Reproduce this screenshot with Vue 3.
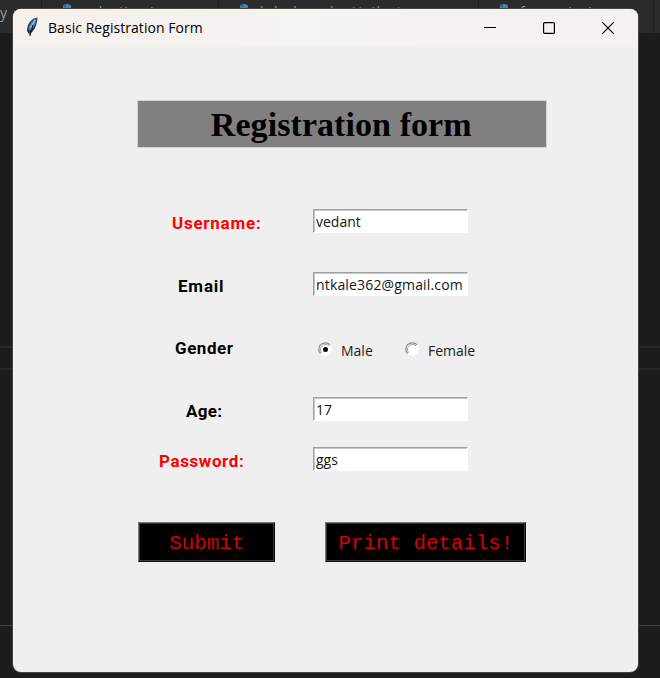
<script setup>
import { ref } from 'vue'

const tabs = [
  { key: 'a', title: 'selecting.in.py' },
  { key: 'b', title: 'label_and_attributes.py' },
  { key: 'c', title: 'forms_in_in.py' },
]
const username = ref('vedant')
const email = ref('ntkale362@gmail.com')
const age = ref('17')
const password = ref('ggs')
const gender = ref('Male')
</script>

<template>
  <div class="desktop">
    <div class="tabs">
      <div class="tab first">y</div>
      <div v-for="t in tabs" :key="t.key" class="tab" :class="'tab-' + t.key">
        <svg width="14" height="12" viewBox="0 0 14 12"><path d="M0 6Q0 4 3 4V2.500Q3 0 7 0t4 2.500V4q3 0 3 2v4H0z" fill="#3f88ad" /><circle cx="5.200" cy="2" r=".7" fill="#222" /></svg>
        <span>{{ t.title }}</span>
      </div>
    </div>
    <div class="editor"><div class="rule strip"></div><div class="rule line"></div></div>

    <main class="window">
      <header class="titlebar">
        <svg class="feather" width="14" height="22" viewBox="0 0 14 22">
          <path d="M12.500 1.500C7 2 2 7 2 15l2 3c4.500-1.500 8-8 8.500-16.500z" fill="#2b3644" />
          <path d="M11.500 2.600C7.500 4 3.600 8 3.600 14l2.200.5c3.200-3 5.400-7 5.700-11.900z" fill="#4a82cc" />
          <path d="M10 4L5.500 12" stroke="#9cc0ec" stroke-width="1.200" />
          <path d="M8 9L4.700 20" stroke="#1a1a1a" stroke-width="1.100" />
        </svg>
        <span class="title">Basic Registration Form</span>
        <div class="controls">
          <svg width="12" height="12" viewBox="0 0 12 12"><path d="M0 5.500h12" /></svg>
          <svg width="12" height="12" viewBox="0 0 12 12"><rect x=".6" y=".6" width="10.800" height="10.800" rx="1" /></svg>
          <svg width="12" height="12" viewBox="0 0 12 12"><path d="M.3.3l11.400 11.400M11.700.3L.3 11.700" /></svg>
        </div>
      </header>

      <h1 class="heading"><span>Registration form</span></h1>

      <form class="form" @submit.prevent>
        <div class="row">
          <label class="red username">Username:</label>
          <input v-model="username" type="text" />
        </div>
        <div class="row">
          <label class="email">Email</label>
          <input v-model="email" class="mail" type="text" />
        </div>
        <div class="row">
          <label class="gender">Gender</label>
          <div class="radios">
            <div v-for="g in ['Male', 'Female']" :key="g" class="radio" :class="g.toLowerCase()" @click="gender = g">
              <svg width="15" height="15" viewBox="0 0 15 15">
                <circle cx="7.500" cy="7.500" r="6.500" fill="#fff" />
                <path d="M2.600 11.700A6.300 6.300 0 0 1 12 2.800" fill="none" stroke="#8c8c8c" stroke-width="1.200" />
                <path d="M3.700 10.700A5 5 0 0 1 11 3.900" fill="none" stroke="#777" stroke-width=".7" />
                <circle v-if="gender === g" cx="7.500" cy="7.500" r="2.500" fill="#000" />
              </svg>
              <span>{{ g }}</span>
            </div>
          </div>
        </div>
        <div class="row last">
          <label class="age">Age:</label>
          <input v-model="age" type="text" />
        </div>
        <div class="row">
          <label class="red password">Password:</label>
          <input v-model="password" type="text" />
        </div>
        <div class="actions">
          <button class="submit" type="submit">Submit</button>
          <button class="print" type="button">Print details!</button>
        </div>
      </form>
    </main>
  </div>
</template>

<style>
body { background: #1c1c1c; overflow: hidden; }
</style>

<style scoped>
* { box-sizing: border-box; }
.desktop { position: relative; width: 660px; height: 678px; background: #1c1c1c; overflow: hidden; }
.tabs { display: flex; width: 660px; height: 33px; background: #2b2b2b; overflow: hidden; }
.tab { display: flex; flex: none; gap: 9px; height: 33px; padding: 4px 0 0 18px; border-right: 1px solid #202020; font: 14px/20px "Open Sans", sans-serif; color: #9a9a9a; white-space: nowrap; }
.tab span { margin-top: -2px; letter-spacing: .6px; }
.tab.first { width: 42px; padding: 3px 0 0; }
.tab-a { width: 177px; }
.tab-b { width: 260px; }
.tab-b span { letter-spacing: 1.400px; }
.tab-c { width: 175px; }
.editor { height: 645px; padding-top: 313px; }
.rule.strip { height: 24px; border: solid #292929; border-width: 2px 0; }
.rule.line { height: 1px; margin-top: 255px; background: #414141; }
.window { position: absolute; left: 13px; top: 9px; width: 625px; height: 663px; border-radius: 8px; background: #efefef; box-shadow: 0 0 0 1px #444; overflow: hidden; }
.titlebar { display: flex; align-items: center; height: 38px; padding: 0 24px 0 12px; background: linear-gradient(90deg, #f6f1ed, #f3f3f0 45%, #f4f2f0); }
.feather { margin-top: -3px; }
.title { margin-left: 9px; font: 14px/20px "Open Sans", sans-serif; letter-spacing: .05px; color: #000; }
.controls { display: flex; gap: 47px; margin-left: auto; }
.controls svg { fill: none; stroke: #000; stroke-width: 1.150; }
.heading { display: flex; justify-content: center; width: 407.500px; height: 46px; margin: 54px 0 0 125px; background: #808080; box-shadow: 0 0 0 1px #d4d4d4; font: bold 34px/48px "Liberation Serif", serif; color: #000; }
.heading span { margin-left: -1px; letter-spacing: .07px; }
.form { padding: 62px 0 0 125px; }
.row { display: flex; height: 24px; margin-bottom: 38.600px; }
.row.last { margin-bottom: 26px; }
label { flex: none; width: 175px; font: bold 17px/29px Roboto, sans-serif; color: #000; white-space: nowrap; }
label.red { color: #f00; }
.username { padding-left: 34px; letter-spacing: .75px; }
.email { padding-left: 40px; letter-spacing: .8px; }
.gender { padding-left: 37px; letter-spacing: .55px; }
.age { padding-left: 48px; letter-spacing: .3px; }
.password { padding-left: 21px; letter-spacing: .6px; }
input { width: 155px; height: 24px; margin: 0; padding: 1px 0 0 2px; border: 1px solid; border-color: #a0a0a0 #fff #fff #a0a0a0; border-radius: 0; outline: 0; background: #fff; box-shadow: inset 1px 1px 0 #c8c8c8; color: #151515; font: 14px/20px "Open Sans", sans-serif; }
.mail { letter-spacing: .16px; }
.radios { display: flex; width: 180px; padding: 8px 0 0 5px; font: 14px/20px "Open Sans", sans-serif; color: #202020; }
.radio { display: flex; gap: 8px; }
.radio span { margin-top: -1px; }
.radio.male { width: 87px; }
.actions { display: flex; gap: 50px; margin-top: 51px; }
button { height: 40px; margin: 0; padding: 3px 0 0; border: 1px solid; border-color: #777 #0c0c0c #111 #777; border-radius: 0; background: #000; box-shadow: inset -1px -1px 0 #383838, inset 1px 1px 0 #303030; color: #d60000; font: 20.800px/35px "Liberation Mono", monospace; white-space: nowrap; }
.submit { width: 137.400px; }
.print { width: 201px; }
</style>
